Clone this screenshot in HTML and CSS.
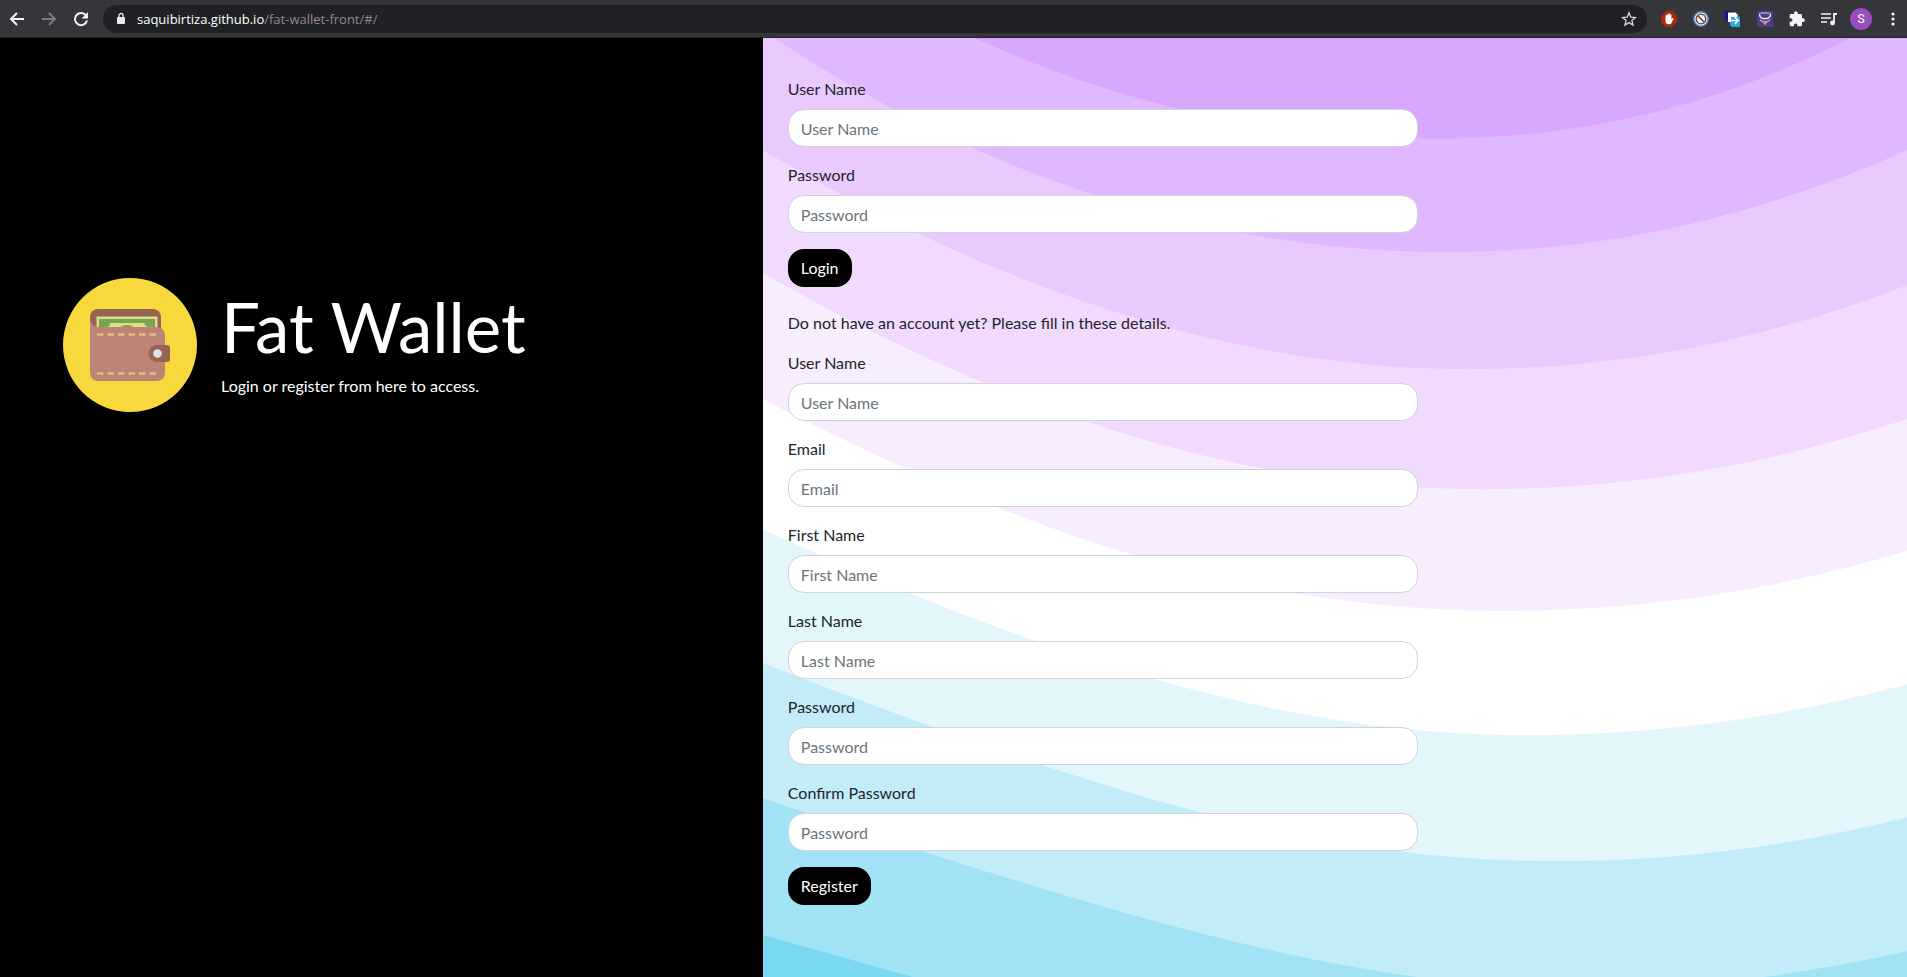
FILE: index.html
```html
<!DOCTYPE html>
<html lang="en">
<head>
<meta charset="utf-8">
<title>Fat Wallet</title>
<link rel="stylesheet" href="styles.css">
</head>
<body>
<header class="toolbar">
  <nav class="nav-buttons">
    <button class="icon-button" aria-label="Back"><svg width="16" height="16" viewBox="0 0 16 16" fill="none" stroke="#f1f3f4" stroke-width="2"><path d="M15 8H2M8 2 2 8l6 6"/></svg></button>
    <button class="icon-button" aria-label="Forward"><svg width="16" height="16" viewBox="0 0 16 16" fill="none" stroke="#7b7c82" stroke-width="2"><path d="M1 8h13M8 2l6 6-6 6"/></svg></button>
    <button class="icon-button" aria-label="Reload"><svg width="16" height="16" viewBox="0 0 16 16"><path d="M13.2 4.8A6.1 6.1 0 1 0 14 9.6" fill="none" stroke="#f1f3f4" stroke-width="2"/><path d="M15 1v6.4H8.6z" fill="#f1f3f4"/></svg></button>
  </nav>
  <div class="address">
    <svg class="lock" width="10" height="13" viewBox="0 0 10 13"><rect x="1" y="5" width="8" height="7" rx="1" fill="#e8eaed"/><path d="M3 5.500V3.500a2 2 0 0 1 4 0v2" fill="none" stroke="#e8eaed" stroke-width="1.300"/></svg>
    <span class="url">saquibirtiza.github.io<span class="url-path">/fat-wallet-front/#/</span></span>
    <button class="icon-button" aria-label="Bookmark"><svg width="16" height="16" viewBox="0 0 16 16"><path d="m8 1.800 1.800 4.300 4.600.4-3.500 3 1.100 4.600-4-2.500-4 2.500 1.100-4.600-3.500-3 4.600-.4z" fill="none" stroke="#d5d7da" stroke-width="1.300"/></svg></button>
  </div>
  <div class="extensions">
    <button class="icon-button" aria-label="Ad blocker"><svg width="16" height="16" viewBox="0 0 16 16"><path d="M5 0h6l5 5v6l-5 5H5l-5-5V5z" fill="#b0260d"/><path d="M4.500 8V4.500a.8.8 0 0 1 1.500 0V3.400a.8.8 0 0 1 1.500 0V2.800a.8.8 0 0 1 1.500 0v.9a.8.8 0 0 1 1.500 0v4.600l.9-1c.6-.5 1.500 0 1 .8L10.500 12c-.6 1-1.500 1.300-2.500 1.300-2.300 0-3.500-1.300-3.500-3z" fill="#fff"/></svg></button>
    <button class="icon-button" aria-label="Site blocker"><svg width="16" height="16" viewBox="0 0 16 16"><circle cx="8" cy="8" r="7.200" fill="#f4f1ec" stroke="#4b86cf" stroke-width="1.500"/><circle cx="8" cy="8" r="4.800" fill="#f6f3f0" stroke="#59403c" stroke-width="1.300"/><path d="m4.600 4.600 6.800 6.800" stroke="#8c4a38" stroke-width="1.600"/></svg></button>
    <button class="icon-button" aria-label="Tab exporter"><svg width="16" height="16" viewBox="0 0 16 16"><path d="M0 0h7l1 2H3v8L0 8z" fill="#14148c"/><path d="M3 1.500h7.500L13 4v2H6v5H3z" fill="#fff"/><path d="M6 6h6V4l3 2v10H7l-2-2v-3h1z" fill="#27acdf"/><path d="M5 9.500h8M9.800 6.200l3.200 3.300-3.200 3.300" fill="none" stroke="#fff" stroke-width="1.700"/></svg></button>
    <button class="icon-button" aria-label="Necklace"><svg width="16" height="16" viewBox="0 0 16 16"><path d="M0 0h16v16H0z" fill="#4b3a85"/><path d="M3.500 2h9" stroke="#d9d5e2"/><path d="M2.500 2.500 3 5.500 5.500 7.500h5L13 5.500l.5-3" fill="none" stroke="#e9e6ef" stroke-width="1.400"/><path d="M3 8.500 5 10.500h6l2-2" fill="none" stroke="#a9a0c4" stroke-width="1.400"/><path d="M6 10h4v2l-2 2.500L6 12z" fill="#d19766"/></svg></button>
    <button class="icon-button" aria-label="Extensions"><svg width="16" height="16" viewBox="0 0 24 24" fill="#f1f3f4"><path d="M21 11h-1.500V6.500a2 2 0 0 0-2-2H13V3a2.700 2.700 0 0 0-5.400 0v1.500H3a2 2 0 0 0-2 2v4.300h1.500a2.700 2.700 0 0 1 0 5.400H1V21a2 2 0 0 0 2 2h4.300v-1.500a2.700 2.700 0 0 1 5.400 0V23h4.800a2 2 0 0 0 2-2v-4.500H21a2.700 2.700 0 0 0 0-5.500z"/></svg></button>
    <button class="icon-button" aria-label="Media"><svg width="16" height="14" viewBox="0 0 16 14"><path d="M0 2h10M0 6h10M0 10h6" stroke="#f1f3f4" stroke-width="1.600"/><path d="M13 11V2h3" fill="none" stroke="#f1f3f4" stroke-width="1.800"/><circle cx="11.500" cy="11" r="2.400" fill="#f1f3f4"/></svg></button>
    <button class="avatar">S</button>
  </div>
  <button class="icon-button menu" aria-label="Menu"><svg width="4" height="16" viewBox="0 0 4 16" fill="#f1f3f4"><circle cx="2" cy="3" r="1.600"/><circle cx="2" cy="8" r="1.600"/><circle cx="2" cy="13" r="1.600"/></svg></button>
</header>
<main class="page">
  <section class="intro">
    <svg class="logo" viewBox="0 0 134 134" role="img" aria-label="Wallet">
      <circle cx="67" cy="67" r="67" fill="#f8d93d"/>
      <rect x="27" y="31" width="71" height="36" rx="8" fill="#966452"/>
      <path d="M33.500 38.500h61V56h-61z" fill="#dade86"/>
      <path d="M36 41h56v15H36z" fill="#7aa54f"/>
      <path d="M47 45h34q1 3 4 4v6H44v-6q3-1 3-4z" fill="#dade86"/>
      <ellipse cx="64" cy="52" rx="8" ry="5" fill="#7aa54f"/>
      <path d="M27 39q0 10 10 10h56q9 0 9 9v36q0 9-9 9H36q-9 0-9-9z" fill="#bc8575"/>
      <path d="M34 56.500h60M34 95.500h60" fill="none" stroke="#e5bd84" stroke-width="2.500" stroke-dasharray="6.500 4"/>
      <path d="M94 67h10q3 0 3 3v11q0 3-3 3H94a8.500 8.500 0 0 1 0-17z" fill="#966452"/>
      <circle cx="94.500" cy="75.500" r="4.300" fill="#dfe0ee"/>
    </svg>
    <div class="intro-text">
      <h1 class="title">Fat Wallet</h1>
      <p class="subtitle">Login or register from here to access.</p>
    </div>
  </section>
  <section class="forms">
    <svg class="waves" viewBox="0 3 1568 1565" preserveAspectRatio="none" aria-hidden="true">
      <path fill="#7ad8f1" d="M0 3h1568v1565H0z"/>
      <path fill="#a1e3f5" d="M0 3V1498L205 1568H1568V3z"/>
      <path fill="#c2ecf8" d="M0 3V1270C517 1482 823 1588 1130 1588Q1336 1588 1568 1525V3z"/>
      <path fill="#e2f6fc" d="M0 3V1045C467 1265 762 1375 1085 1375Q1328 1375 1568 1302V3z"/>
      <path fill="#fff" d="M0 3V822C413 1051 732 1165 1045 1165Q1310 1165 1568 1080V3z"/>
      <path fill="#f8edff" d="M0 3V605C372 840 678 958 1015 958Q1292 958 1568 858V3z"/>
      <path fill="#f0dbff" d="M0 3V395C347 635 657 755 990 755Q1283 755 1568 638V3z"/>
      <path fill="#e8caff" d="M0 3V190Q505 555 965 555Q1272 555 1568 415V3z"/>
      <path fill="#e0b8ff" d="M15 3Q460 360 940 360Q1255 360 1568 190V3z"/>
      <path fill="#d8a8ff" d="M290 3Q593 171 920 171Q1222 171 1490 3z"/>
    </svg>
    <form class="form">
      <div class="field"><label for="login-user">User Name</label><input id="login-user" type="text" placeholder="User Name"></div>
      <div class="field"><label for="login-pass">Password</label><input id="login-pass" type="password" placeholder="Password"></div>
      <button class="submit" type="submit">Login</button>
    </form>
    <p class="hint">Do not have an account yet? Please fill in these details.</p>
    <form class="form">
      <div class="field"><label for="reg-user">User Name</label><input id="reg-user" type="text" placeholder="User Name"></div>
      <div class="field"><label for="reg-email">Email</label><input id="reg-email" type="email" placeholder="Email"></div>
      <div class="field"><label for="reg-first">First Name</label><input id="reg-first" type="text" placeholder="First Name"></div>
      <div class="field"><label for="reg-last">Last Name</label><input id="reg-last" type="text" placeholder="Last Name"></div>
      <div class="field"><label for="reg-pass">Password</label><input id="reg-pass" type="password" placeholder="Password"></div>
      <div class="field"><label for="reg-confirm">Confirm Password</label><input id="reg-confirm" type="password" placeholder="Password"></div>
      <button class="submit" type="submit">Register</button>
    </form>
  </section>
</main>
</body>
</html>
```
FILE: styles.css
```css
* {
  box-sizing: border-box;
}

body {
  margin: 0;
  min-height: 100vh;
  display: flex;
  flex-direction: column;
  font: 16px/24px Lato, sans-serif;
  color: #212529;
}

button {
  border: 0;
  padding: 0;
  background: none;
  font: inherit;
  cursor: pointer;
}

.toolbar {
  height: 38px;
  display: flex;
  align-items: center;
  padding: 0 12px 0 9px;
  background: #35363a;
  border-bottom: 1px solid #232427;
}

.nav-buttons {
  display: flex;
  align-items: center;
  gap: 16px;
}

.icon-button {
  display: flex;
  justify-content: center;
}

.address {
  flex: 1;
  height: 28px;
  display: flex;
  align-items: center;
  margin: 0 6px 0 14px;
  padding: 0 10px 0 13px;
  border-radius: 14px;
  background: #202124;
  font: 13px/16px "Open Sans", sans-serif;
}

.url {
  flex: 1;
  padding-left: 11px;
  color: #fff;
}

.url-path {
  color: #96868c;
}

.extensions {
  display: grid;
  grid-template-columns: repeat(7, 32px);
  align-items: center;
  justify-items: center;
}

.menu {
  padding-left: 14px;
}

.avatar {
  width: 22px;
  height: 22px;
  border-radius: 50%;
  background: #9c4dbd;
  color: #fff;
  font: 12px/22px Roboto, sans-serif;
}

.page {
  flex: 1;
  display: grid;
  grid-template-columns: 40% 60%;
}

.intro {
  display: flex;
  align-items: flex-start;
  gap: 24px;
  padding: 240px 24px 0 63px;
  background: #000;
  color: #fff;
}

.logo {
  flex: none;
  width: 134px;
}

.intro-text {
  padding-top: 10px;
}

.title {
  margin: 0 0 8px;
  font-size: 69px;
  font-weight: 400;
  line-height: 78px;
}

.subtitle,
.hint {
  margin: 0;
}

.forms {
  position: relative;
  padding: 39px 25px 24px;
}

.waves {
  position: absolute;
  inset: 0;
  width: 100%;
  height: 100%;
}

.form,
.hint {
  position: relative;
}

.form {
  width: calc(55% + 28px);
}

.hint {
  margin: 24px 0 16px;
}

.field {
  display: flex;
  flex-direction: column;
  gap: 8px;
  margin-bottom: 16px;
}

.field input {
  width: 100%;
  height: 38px;
  padding: 6px 12px;
  border: 1px solid #ced4da;
  border-radius: 16px;
  background: #fff;
  color: #495057;
  font: inherit;
}

.field input::placeholder {
  color: #6c757d;
  opacity: 1;
}

.submit {
  display: block;
  height: 38px;
  padding: 0 13px;
  border-radius: 16px;
  background: #000;
  color: #fff;
}
```
